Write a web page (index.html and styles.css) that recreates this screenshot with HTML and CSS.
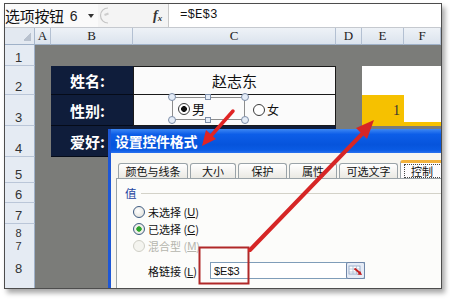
FILE: index.html
```html
<!DOCTYPE html>
<html lang="zh-CN">
<head>
<meta charset="utf-8">
<title>设置控件格式</title>
<link rel="stylesheet" href="styles.css">
</head>
<body>
<div class="frame">
  <div class="fbar">
    <div class="namebox">
      <span class="nb-name">选项按钮</span>
      <span class="nb-num">6</span>
      <span class="nb-drop"></span>
    </div>
    <svg class="splitter" width="14" height="23" viewBox="0 0 14 23"><path d="M10 4 A7.5 7.5 0 0 0 10 19" fill="none" stroke="#c4c4c4" stroke-width="1.2"/><path d="M6.5 11 L10.5 9.5" stroke="#cdcdcd" stroke-width="2"/></svg>
    <div class="fx"><span class="fx-f">f</span><span class="fx-x">x</span></div>
    <div class="finput">=$E$3</div>
  </div>
  <div class="sheet">
    <div class="corner"></div>
    <div class="ch ca">A</div>
    <div class="ch cb">B</div>
    <div class="ch cc">C</div>
    <div class="ch cd">D</div>
    <div class="ch ce">E</div>
    <div class="ch cf">F</div>

    <div class="rh r1">1</div>
    <div class="rh r2">2</div>
    <div class="rh r3">3</div>
    <div class="rh r4">4</div>
    <div class="rh r5">5</div>
    <div class="rh r6">6</div>
    <div class="rh r7">7</div>
    <div class="rh r8"><span>8</span><span>7</span></div>
    <div class="rh r9"><span>8</span></div>

    <div class="navy b2">姓名:</div>
    <div class="wcell c2">赵志东</div>
    <div class="navy b3">性别:</div>
    <div class="wcell c3">
      <div class="optctl">
        <span class="hc h-tl"></span><span class="hc h-tr"></span>
        <span class="hc h-bl"></span><span class="hc h-br"></span>
        <span class="hs h-tm"></span><span class="hs h-bm"></span>
        <span class="orb on"></span><span class="olabel">男</span>
      </div>
      <span class="orb second"></span><span class="olabel small">女</span>
    </div>
    <div class="navy b4">爱好:</div>
    <div class="navy c4"></div>

    <div class="ef2"></div>
    <div class="e3">1</div>
    <div class="f3"></div>
  </div>

  <div class="dialog">
    <div class="dlg-title">设置控件格式</div>
    <div class="tabs">
      <div class="tab w1">颜色与线条</div>
      <div class="tab w2">大小</div>
      <div class="tab w3">保护</div>
      <div class="tab w4">属性</div>
      <div class="tab w5">可选文字</div>
      <div class="tab sel"><span>控制</span></div>
    </div>
    <div class="panel">
      <div class="group">值</div>
      <div class="radios">
        <div class="radio"><span class="rb"></span>未选择 (<u>U</u>)</div>
        <div class="radio"><span class="rb on"></span>已选择 (<u>C</u>)</div>
        <div class="radio off"><span class="rb"></span>混合型 (<u>M</u>)</div>
      </div>
      <div class="link">
        <span class="link-label">格链接 (<u>L</u>)</span>
        <div class="link-input">
          <span>$E$3</span>
          <svg class="refedit" width="19" height="17" viewBox="0 0 19 17">
            <rect x="0.5" y="0.5" width="18" height="16" rx="1.5" fill="#e6ecf6" stroke="#6f86a8"/>
            <rect x="3" y="4" width="11" height="8" fill="#fff" stroke="#8aa0c0" stroke-width="0.8"/>
            <path d="M3 7h11M3 10h11M7 4v8M10.5 4v8" stroke="#a8b8d0" stroke-width="0.7"/>
            <path d="M8.5 6.5l5.5 4.5" stroke="#c42020" stroke-width="2"/>
            <path d="M16 13l-4.5-0.6 2.8-3.2z" fill="#c42020"/>
          </svg>
        </div>
      </div>
    </div>
  </div>
</div>

<svg class="marks" width="450" height="300" viewBox="0 0 450 300">
  <rect x="199.5" y="247.5" width="49" height="36" fill="none" stroke="#b02828" stroke-width="2"/>
  <line x1="250" y1="250" x2="362" y2="134" stroke="#d62626" stroke-width="4" stroke-linecap="round"/>
  <polygon points="374,120 367,139 356,128" fill="#d62626"/>
  <line x1="233" y1="111" x2="210" y2="137" stroke="#e02424" stroke-width="3.5" stroke-linecap="round"/>
  <polygon points="202,146 216,139 206,130" fill="#e02424"/>
</svg>
</body>
</html>
```

FILE: styles.css
```css
* { box-sizing: border-box; }
html, body { margin: 0; padding: 0; }
body {
  width: 450px;
  height: 300px;
  overflow: hidden;
  position: relative;
  background: #fff;
  font-family: "Noto Sans CJK SC", "Liberation Sans", sans-serif;
}

.frame {
  margin: 3px 0 0 4px;
  width: 438px;
  height: 286px;
  border: 1px solid #4d4d4d;
  background: #7b7c79;
  position: relative;
  overflow: hidden;
  box-shadow: 3px 4px 5px rgba(0, 0, 0, 0.35);
}

/* formula bar */
.fbar {
  height: 24px;
  display: flex;
  align-items: stretch;
  background: #f4f4f4;
  border-bottom: 1px solid #c5c9cf;
}
.namebox {
  width: 93px;
  display: flex;
  align-items: center;
  background: #fafafa;
}
.nb-name { font-size: 15px; line-height: 1; color: #111; letter-spacing: -0.3px; }
.nb-num { font-family: "Liberation Sans", sans-serif; font-size: 14px; margin-left: 6px; color: #222; }
.nb-drop {
  width: 0; height: 0;
  border-left: 3.5px solid transparent;
  border-right: 3.5px solid transparent;
  border-top: 4px solid #333;
  margin-left: 10px;
}
.splitter { display: block; flex: none; }
.fx {
  margin-left: auto;
  width: 15px;
  display: flex;
  align-items: center;
  font-family: "Liberation Serif", serif;
  font-style: italic;
  font-weight: bold;
  color: #333;
}
.fx-f { font-size: 14px; }
.fx-x { font-size: 9px; margin-top: 4px; }
.finput {
  width: 273px;
  background: #fff;
  border-left: 1px solid #c8c8c8;
  padding-left: 11px;
  font-family: "Liberation Mono", monospace;
  font-size: 12.5px;
  line-height: 23px;
  color: #111;
}

/* sheet grid */
.sheet {
  display: grid;
  grid-template-columns: 30px 16px 82px 203px 26px 42px 37px;
  grid-template-rows: 17px 21px 29px 31px 31px 26px 20px 21px 30px 34px;
}
.corner {
  grid-area: 1 / 1;
  border-right: 1px solid #a9b8cc;
  border-bottom: 1px solid #9fb1c8;
  background:
    linear-gradient(135deg, transparent 50%, #b8c1ce 50%) right 3px bottom 3px / 8px 8px no-repeat,
    #e3e9f1;
}
.ch {
  grid-row: 1;
  background: linear-gradient(#eef2f7, #dbe3ed);
  border-right: 1px solid #b3c0d2;
  border-bottom: 1px solid #9fb1c8;
  font-family: "Liberation Serif", serif;
  font-size: 13px;
  color: #222;
  display: flex;
  align-items: center;
  justify-content: center;
}
.ca { grid-column: 2; }
.cb { grid-column: 3; }
.cc { grid-column: 4; }
.cd { grid-column: 5; }
.ce { grid-column: 6; }
.cf { grid-column: 7; }

.rh {
  grid-column: 1;
  background: #e5ebf3;
  border-right: 1px solid #9fb1c8;
  border-bottom: 1px solid #bac6d8;
  font-family: "Liberation Sans", sans-serif;
  font-size: 13px;
  line-height: 14px;
  color: #333;
  display: flex;
  flex-direction: column;
  align-items: center;
  justify-content: flex-end;
  padding-right: 2px;
}
.r1 { grid-row: 2; }
.r2 { grid-row: 3; }
.r3 { grid-row: 4; }
.r4 { grid-row: 5; }
.r5 { grid-row: 6; }
.r6 { grid-row: 7; }
.r7 { grid-row: 8; }
.r8 { grid-row: 9; border-bottom: none; font-size: 11px; line-height: 13px; padding-bottom: 1px; }
.r9 { grid-row: 10; justify-content: flex-start; padding-top: 8px; border-bottom: none; }

/* table cells */
.navy {
  background: #0f1d3b;
  color: #fff;
  font-weight: bold;
  font-size: 15px;
  display: flex;
  align-items: center;
  padding-left: 19px;
  border-bottom: 1px solid #050b18;
}
.b2 { grid-area: 3 / 3; }
.b3 { grid-area: 4 / 3; }
.b4 { grid-area: 5 / 3; }
.c4 { grid-area: 5 / 4; }

.wcell {
  background: #fbfbfb;
  border-left: 1px solid #1a1a1a;
  border-right: 1px solid #1a1a1a;
  border-bottom: 1px solid #1a1a1a;
}
.c2 {
  grid-area: 3 / 4;
  border-top: 1px solid #1a1a1a;
  display: flex;
  align-items: center;
  justify-content: center;
  font-size: 15px;
  color: #111;
}
.c3 {
  grid-area: 4 / 4;
  display: flex;
  align-items: center;
  padding-left: 38px;
}
.optctl {
  align-self: flex-start;
  margin-top: 2px;
  width: 73px;
  height: 23px;
  flex: none;
  border: 1px solid #8d8d8d;
  position: relative;
  display: flex;
  align-items: center;
  padding-left: 5px;
}
.hc, .hs {
  position: absolute;
  background: #e4ecf7;
  border: 1px solid #7d8ea8;
}
.hc { width: 8px; height: 8px; border-radius: 50%; }
.hs { width: 6px; height: 6px; }
.h-tl { left: -5px; top: -5px; }
.h-tr { right: -5px; top: -5px; }
.h-bl { left: -5px; bottom: -5px; }
.h-br { right: -5px; bottom: -5px; }
.h-tm { left: 32px; top: -4px; }
.h-bm { left: 32px; bottom: -4px; }

.orb {
  width: 12px;
  height: 12px;
  flex: none;
  border-radius: 50%;
  border: 1px solid #3a3a3a;
  background: #fff;
}
.orb.on { background: radial-gradient(circle, #111 0 2.6px, #fff 3.2px); }
.orb.second { margin-left: 8px; }
.olabel { font-size: 13px; color: #111; margin-left: 2px; line-height: 1; }
.olabel.small { font-size: 12px; }

.ef2 { grid-area: 3 / 6 / 4 / 8; background: #fff; }
.e3 {
  grid-area: 4 / 6;
  background: #f6c100;
  display: flex;
  align-items: center;
  justify-content: flex-end;
  padding-right: 4px;
  font-family: "Liberation Serif", serif;
  font-size: 14px;
  color: #333;
}
.f3 { grid-area: 4 / 7; background: #fff; border-bottom: 4px solid #f6c100; }

/* dialog window */
.dialog {
  position: absolute;
  left: 103px;
  top: 125px;
  width: 345px;
  height: 170px;
  border-left: 3px solid #1d57d6;
  background: #f7f6f1;
  display: flex;
  flex-direction: column;
}
.dlg-title {
  height: 24px;
  flex: none;
  background: linear-gradient(#3d87f3 0%, #0d5ee8 22%, #0654dc 65%, #0a5be4 88%, #2a72ee 100%);
  color: #fff;
  font-weight: bold;
  font-size: 14px;
  line-height: 24px;
  padding-left: 4px;
  letter-spacing: -0.3px;
}
.tabs {
  height: 25px;
  flex: none;
  display: flex;
  align-items: flex-end;
  padding-left: 7px;
}
.tab {
  height: 15px;
  flex: none;
  margin-right: 2px;
  border: 1px solid #9aa3a8;
  border-bottom: none;
  border-radius: 3px 3px 0 0;
  background: linear-gradient(#ffffff, #eae9e3);
  font-size: 11px;
  line-height: 14px;
  text-align: center;
  color: #111;
}
.w1 { width: 70px; }
.w2 { width: 46px; }
.w3 { width: 49px; }
.w4 { width: 48px; }
.w5 { width: 59px; }
.tab.sel {
  width: 46px;
  height: 18px;
  border-top: 3px solid #f2b23c;
  background: #fcfcfe;
  padding: 1px 3px 0;
}
.tab.sel span {
  display: block;
  border: 1px dotted #444;
  line-height: 12px;
  padding-left: 6px;
  text-align: left;
}
.panel {
  flex: 1;
  margin-left: 5px;
  border: 1px solid #9aa3a8;
  background: #fcfcfa;
  padding: 6px 0 0 8px;
}
.group {
  display: flex;
  align-items: center;
  font-size: 11.5px;
  line-height: 16px;
  color: #1d45a0;
}
.group::after {
  content: "";
  flex: 1;
  height: 1px;
  background: #d3d2c8;
  margin-left: 4px;
}
.radios { margin-top: 2px; padding-left: 8px; }
.radio {
  display: flex;
  align-items: center;
  height: 17px;
  font-size: 11px;
  color: #111;
}
.radio u, .link u { font-family: "Liberation Sans", sans-serif; }
.rb {
  width: 12px;
  height: 12px;
  flex: none;
  border-radius: 50%;
  border: 1px solid #3f5c82;
  background: radial-gradient(circle at 40% 40%, #ffffff, #dcdcd4);
  margin-right: 3px;
}
.rb.on { background: radial-gradient(circle, #2da42d 0 2.4px, #f4f4ee 3px, #dcdcd4); }
.radio.off { color: #b5b5ad; }
.radio.off .rb { border-color: #cfcfc6; background: #f4f4ef; }
.link {
  display: flex;
  align-items: center;
  margin-top: 8px;
  padding-left: 23px;
  height: 17px;
  font-size: 11px;
  color: #111;
}
.link-label { width: 62px; flex: none; }
.link-input {
  width: 155px;
  height: 17px;
  flex: none;
  border: 1px solid #7f9db9;
  background: #fff;
  display: flex;
  align-items: center;
  justify-content: space-between;
  padding-left: 3px;
  font-family: "Liberation Sans", sans-serif;
  font-size: 11px;
}
.refedit { display: block; margin-right: -1px; }

.marks {
  position: absolute;
  left: 0;
  top: 0;
  pointer-events: none;
}
```
